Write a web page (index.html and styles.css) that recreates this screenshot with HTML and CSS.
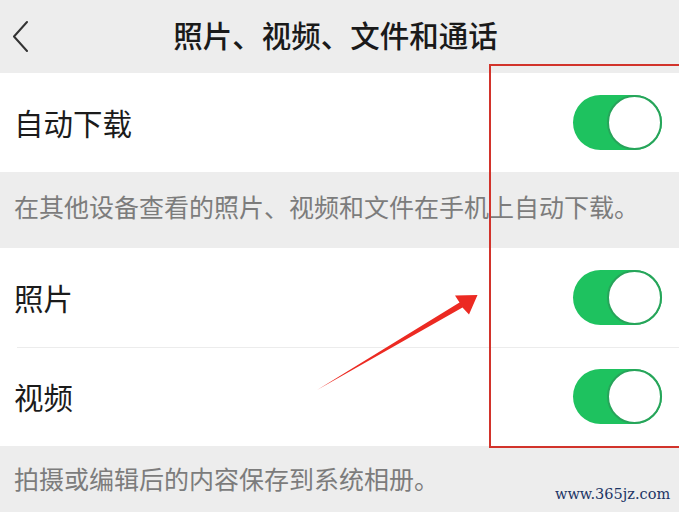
FILE: index.html
```html
<!DOCTYPE html>
<html lang="zh-CN">
<head>
  <meta charset="UTF-8">
  <meta name="viewport" content="width=device-width, initial-scale=1.0">
  <title>照片、视频、文件和通话</title>
  <link rel="stylesheet" href="styles.css">
</head>
<body>
  <div class="page">
    <header class="nav-bar">
      <span class="back">
        <svg width="20" height="32" viewBox="0 0 20 32">
          <polyline points="16,2 3,16.5 16,31" fill="none" stroke="#333" stroke-width="2" stroke-linecap="round" stroke-linejoin="round"/>
        </svg>
      </span>
      <h1 class="nav-title">照片、视频、文件和通话</h1>
      <span></span>
    </header>

    <div class="group">
      <div class="cell">
        <span class="cell-label">自动下载</span>
        <span class="switch on"></span>
      </div>
    </div>
    <p class="tip tip-mid">在其他设备查看的照片、视频和文件在手机上自动下载。</p>

    <div class="group">
      <div class="cell">
        <span class="cell-label">照片</span>
        <span class="switch on"></span>
      </div>
      <div class="cell">
        <span class="cell-label">视频</span>
        <span class="switch on"></span>
      </div>
    </div>
    <p class="tip tip-end">拍摄或编辑后的内容保存到系统相册。</p>

    <!-- annotation drawn over the screenshot -->
    <svg class="markup" width="679" height="512" viewBox="0 0 679 512">
      <rect x="490" y="65" width="200" height="382" fill="none" stroke="#d2332b" stroke-width="2"/>
      <polygon points="317,390 459.5,302.4 455,295.5 477.5,295 469,314.5 462.5,307.6" fill="#ec2a22"/>
    </svg>
    <span class="watermark">www.365jz.com</span>
  </div>
</body>
</html>
```

FILE: styles.css
```css
body {
  margin: 0;
  background: #ededed;
  font-family: "Noto Sans CJK SC", "Noto Sans", sans-serif;
  color: #1b1b1b;
}
.page {
  position: relative;
  width: 679px;
  height: 512px;
  overflow: hidden;
  background: #ededed;
}
.nav-bar {
  height: 73px;
  display: grid;
  grid-template-columns: 56px 1fr 64px;
  align-items: center;
}
.back {
  display: flex;
  align-items: center;
  padding-left: 11px;
  padding-bottom: 2px;
}
.nav-title {
  margin: 0;
  padding-bottom: 4px;
  text-align: center;
  font-size: 29.5px;
  font-weight: 500;
  line-height: 1;
  color: #1a1a1a;
}
.group {
  background: #fff;
}
.cell {
  height: 99px;
  display: flex;
  align-items: center;
  justify-content: space-between;
  padding: 0 17px 0 14px;
  position: relative;
}
.cell + .cell::before {
  content: "";
  position: absolute;
  left: 17px;
  right: 0;
  top: 0;
  height: 1px;
  background: #ececec;
}
.cell-label {
  font-size: 29.5px;
  line-height: 1;
}
.switch {
  width: 89px;
  height: 55px;
  border-radius: 28px;
  background: #e5e5e5;
  position: relative;
}
.switch.on {
  background: #1ec25f;
}
.switch::after {
  content: "";
  position: absolute;
  right: 0;
  top: 0;
  width: 51px;
  height: 51px;
  border-radius: 50%;
  background: #fff;
  border: 2px solid #27a45a;
}
.tip {
  margin: 0;
  padding: 0 14px;
  font-size: 25px;
  line-height: 34px;
  color: #7c7c7c;
}
.tip-mid {
  height: 76px;
  padding-top: 17px;
  box-sizing: border-box;
}
.tip-end {
  padding-top: 15px;
}
.markup {
  position: absolute;
  left: 0;
  top: 0;
}
.watermark {
  position: absolute;
  left: 555px;
  top: 486px;
  font-family: "DejaVu Serif", serif;
  font-size: 14.5px;
  color: #1c3565;
}
```
